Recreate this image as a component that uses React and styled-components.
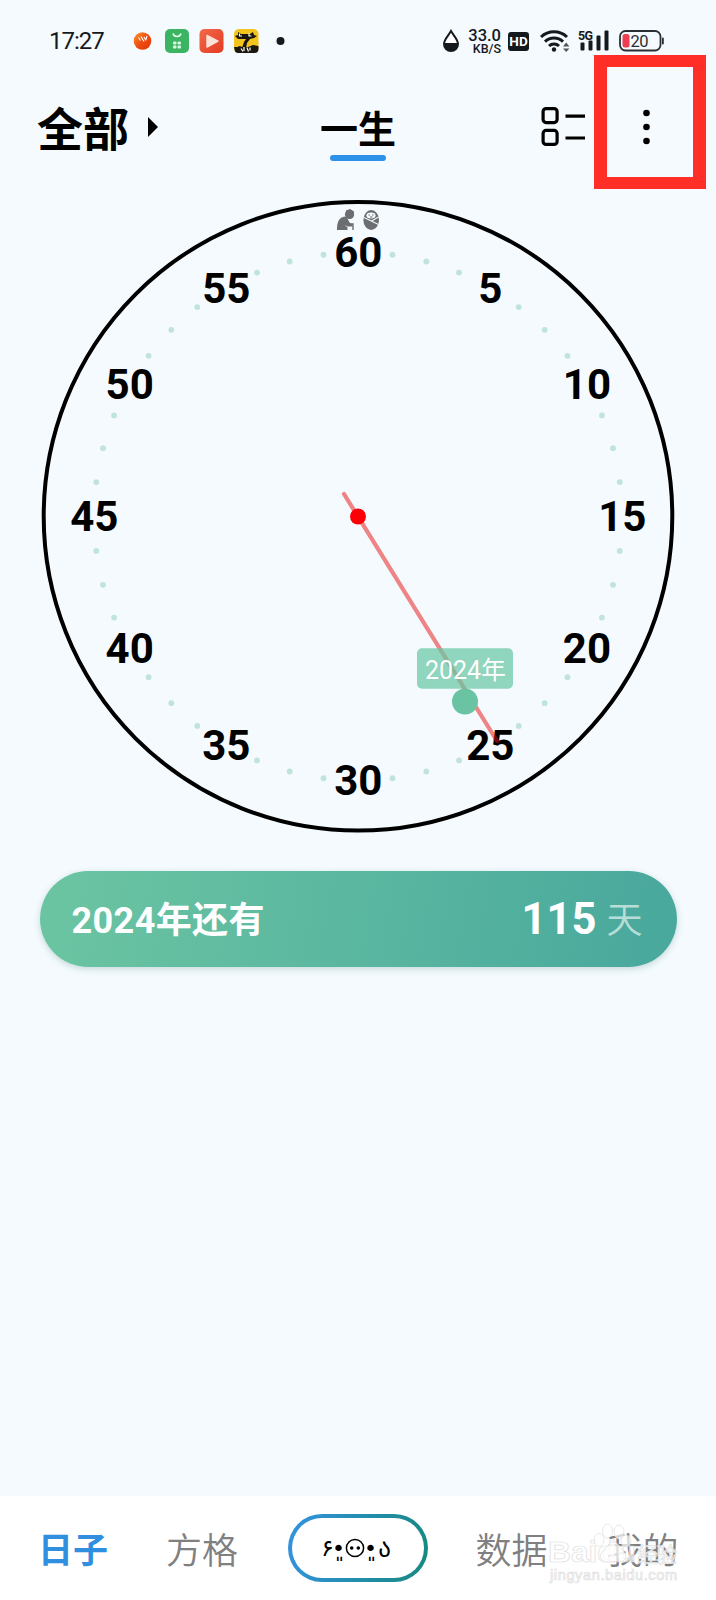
import React from "react";
import styled, { createGlobalStyle } from "styled-components";

const GlobalStyle = createGlobalStyle`
  body {
    margin: 0;
    background-color: #f4fafd;
    font-family: Roboto, "Noto Sans CJK SC", sans-serif;
  }
`;

const Screen = styled.div`
  position: relative;
  display: flex;
  flex-direction: column;
  box-sizing: border-box;
  width: 716px;
  height: 1600px;
  overflow: hidden;
  background-color: #f4fafd;
  color: #000;
`;

const StatusBar = styled.div`
  display: flex;
  align-items: center;
  justify-content: space-between;
  height: 82px;
  padding: 0 52px 0 49px;
  box-sizing: border-box;
  color: #14191d;
`;

const StatusGroup = styled.div`
  display: flex;
  align-items: center;
  gap: ${({ $gap }) => $gap || 0}px;
`;

const Time = styled.span`
  width: 84px;
  font-size: 24px;
  letter-spacing: -1px;
  line-height: 28px;
`;

const Speed = styled.div`
  display: flex;
  flex-direction: column;
  align-items: flex-end;
  width: 34px;
  margin: 0 7px 0 7px;
  font-weight: 500;
`;

const SpeedValue = styled.span`
  font-size: 16.5px;
  line-height: 13px;
`;

const SpeedUnit = styled.span`
  font-size: 12.5px;
  line-height: 11px;
  margin-top: 1px;
`;

const HdBadge = styled.span`
  width: 21px;
  height: 19px;
  margin-right: 11px;
  border-radius: 3px;
  background-color: #14191d;
  color: #fff;
  font-size: 13.5px;
  font-weight: 700;
  line-height: 19px;
  text-align: center;
`;

const Header = styled.header`
  position: relative;
  display: grid;
  grid-template-columns: 1fr 80px 1fr;
  align-items: center;
  height: 92px;
  padding: 0 37px;
`;

const Filter = styled.div`
  display: flex;
  align-items: center;
  gap: 19px;
  margin-top: 3px;
  font-size: 46px;
  font-weight: 700;
  line-height: 60px;
`;

const Arrow = styled.span`
  border-left: 10px solid #000;
  border-top: 10px solid transparent;
  border-bottom: 10px solid transparent;
  margin-top: -5px;
`;

const Heading = styled.div`
  display: flex;
  flex-direction: column;
  align-items: center;
  margin-top: 9px;
  font-size: 38px;
  font-weight: 700;
  line-height: 50px;

  &::after {
    content: "";
    width: 56px;
    height: 6px;
    border-radius: 3px;
    background-color: #2d91e9;
  }
`;

const HeaderActions = styled.div`
  display: flex;
  align-items: center;
  justify-content: flex-end;
  gap: 57px;
  margin: -2px 28px 0 0;
`;

const Highlight = styled.div`
  position: absolute;
  top: -27px;
  left: 593.5px;
  width: 112px;
  height: 134px;
  box-sizing: border-box;
  border: 13px solid #ff2f28;
  border-top-width: 12px;
  border-bottom-width: 12px;
`;

const Dial = styled.svg`
  display: block;
  width: 640px;
  height: 640px;
  margin: 22px auto 0 38px;
`;

const DialNumber = styled.text`
  font-size: 42px;
  font-weight: 700;
  text-anchor: middle;
`;

const TagText = styled.text`
  font-size: 25px;
  fill: #fff;
  text-anchor: middle;
`;

const Card = styled.section`
  display: flex;
  align-items: center;
  box-sizing: border-box;
  width: 637px;
  height: 96px;
  margin: 35px 0 0 39.5px;
  padding: 0 34px 0 32px;
  border-radius: 48px;
  background: linear-gradient(100deg, #6ac4a2 5%, #4aa99d 95%);
  box-shadow: 0 2px 6px rgba(60, 120, 120, 0.25);
  color: #fff;
`;

const CardTitle = styled.span`
  flex: 1;
  margin-top: -4px;
  font-size: 36px;
  font-weight: 700;
  letter-spacing: 0.4px;
`;

const CardDays = styled.span`
  font-size: 43.5px;
  font-weight: 700;
`;

const CardUnit = styled.span`
  margin: -5px 0 0 10px;
  font-size: 36px;
  font-weight: 350;
  opacity: 0.6;
`;

const TabBar = styled.nav`
  display: flex;
  align-items: center;
  height: 104px;
  margin-top: auto;
  padding: 0 38px;
  background-color: #fff;
`;

const Tab = styled.span`
  flex: none;
  width: 72px;
  margin: 8px ${({ $gap }) => $gap || 0}px 0 0;
  font-size: ${({ $active }) => ($active ? 35 : 36)}px;
  line-height: 48px;
  font-weight: ${({ $active }) => ($active ? 700 : 350)};
  color: ${({ $active }) => ($active ? "#318fe0" : "#808080")};
`;

const FaceButton = styled.div`
  flex: none;
  display: flex;
  align-items: center;
  justify-content: center;
  box-sizing: border-box;
  width: 140px;
  height: 68px;
  margin-right: 48px;
  border: 4px solid transparent;
  border-radius: 34px;
  background: linear-gradient(#fff, #fff) padding-box,
    linear-gradient(100deg, #3393e0, #16897f) border-box;
  font-family: "DejaVu Sans", sans-serif;
`;

const FacePart = styled.span`
  display: flex;
  justify-content: center;
  width: ${({ $w }) => $w}px;
  font-size: ${({ $size }) => $size || 22}px;
  white-space: nowrap;
`;

const Watermark = styled.div`
  position: absolute;
  left: 548px;
  top: 1520px;
  width: 134px;
  height: 68px;
`;

const WatermarkText = styled.text`
  font-family: "Liberation Sans", "Noto Sans CJK SC", sans-serif;
  font-size: ${({ $size }) => $size}px;
  font-weight: ${({ $weight }) => $weight || 700};
  fill: rgba(255, 255, 255, 0.7);
  stroke: #dedede;
  stroke-width: 0.7px;
`;

const CENTER = 320;
const RADIUS = 264;

const polar = (deg) => {
  const rad = (deg * Math.PI) / 180;
  return [CENTER + RADIUS * Math.sin(rad), CENTER - RADIUS * Math.cos(rad)];
};

const AppIcons = () => (
  <svg width="126" height="24" viewBox="0 0 126 24">
    <defs>
      <linearGradient id="orange" x1="0" y1="0" x2="1" y2="1">
        <stop offset="0" stopColor="#f89a2b" />
        <stop offset="0.5" stopColor="#ee4d12" />
        <stop offset="1" stopColor="#e0350a" />
      </linearGradient>
      <linearGradient id="red" x1="0" y1="0" x2="1" y2="1">
        <stop offset="0" stopColor="#f26a4a" />
        <stop offset="1" stopColor="#e33a22" />
      </linearGradient>
    </defs>
    <circle cx="9.5" cy="12" r="8.8" fill="url(#orange)" />
    <path d="M5.5 8.500l2 3M8 7.500l3 5M11 8l2 3.500M14 7l-1 3.500" stroke="#fff" strokeWidth="1.1" fill="none" />
    <rect x="32" y="0" width="24" height="24" rx="5" fill="#3cb562" />
    <path d="M40 4.500c1 4 7 4 8 0" stroke="#e6ffec" strokeWidth="1.5" fill="none" />
    <g fill="#d9f7df">
      <rect x="40" y="12.5" width="3.5" height="3" rx="1" />
      <rect x="44.5" y="12.5" width="3.5" height="3" rx="1" />
      <rect x="40" y="16.5" width="3.5" height="3" rx="1" />
      <rect x="44.5" y="16.5" width="3.5" height="3" rx="1" />
    </g>
    <rect x="66.5" y="0" width="24" height="24" rx="5" fill="url(#red)" />
    <path d="M74 6.500v11.500l11-5.800z" fill="#fde0d8" stroke="#fde0d8" strokeWidth="1.5" strokeLinejoin="round" />
    <rect x="101" y="0" width="24.5" height="24" rx="5" fill="#f3c51c" />
    <path d="M102 7l3-1 0-3 3 2h9l3-2 1 3 3 1-3 2-4 1-3 4-1 5h-4l2-6 2-3h-8z" fill="#19170f" />
    <path d="M101 18l4 0 1-1 4 1 5 0 5-2 5.500 1v3a4 4 0 0 1-4 4h-16a4 4 0 0 1-4-4z" fill="#19170f" />
    <path d="M106.500 4.500v2.500h2.500M116 4.500v2.500h2.500M108 19.500l2 3M111 18v4M114 18.500l1.500 4M117 18.500v3" stroke="#fff" strokeWidth="1.2" fill="none" />
  </svg>
);

const DropIcon = () => (
  <svg width="18" height="24" viewBox="0 0 18 24">
    <path d="M9 2C6.500 6.500 2 10.500 2 15a7 7 0 0 0 14 0C16 10.500 11.500 6.500 9 2z" fill="#fff" stroke="#14191d" strokeWidth="2" />
    <path d="M2 14h14c0 10-14 10-14 0z" fill="#14191d" />
  </svg>
);

const WifiIcon = () => (
  <svg width="31" height="24" viewBox="0 0 31 24">
    <g fill="none" stroke="#14191d" strokeWidth="3">
      <path d="M1 8a19 19 0 0 1 26 0" />
      <path d="M5 12.700a13 13 0 0 1 18 0" />
      <path d="M9 17a7.200 7.200 0 0 1 10 0" />
    </g>
    <circle cx="14" cy="20.5" r="2.2" fill="#14191d" />
    <path d="M23 17.500l3.200-4 3.200 4zM23 19.500l3.200 3.500 3.200-3.500z" fill="#555" />
  </svg>
);

const SignalIcon = () => (
  <svg width="33" height="24" viewBox="0 0 33 24" overflow="visible">
    <text x="0" y="10.5" fontSize="12.5" fontWeight="700" textLength="15" fill="#14191d">5G</text>
    <g fill="#14191d">
      <rect x="2.500" y="13.5" width="4" height="8" rx="1" />
      <rect x="10.500" y="11.5" width="4" height="10" rx="1" />
      <rect x="18.500" y="6.5" width="4" height="15" rx="1" />
      <rect x="26.500" y="1.5" width="4" height="20" rx="1" />
    </g>
  </svg>
);

const BatteryIcon = () => (
  <svg width="46" height="22" viewBox="0 0 46 22">
    <rect x="2" y="1" width="40.5" height="19.5" rx="5.5" fill="none" stroke="#2a2f33" strokeWidth="1.800" />
    <rect x="4.5" y="4" width="7" height="13.5" rx="2.5" fill="#ee3d50" />
    <rect x="44" y="7.5" width="1.8" height="7" rx="0.9" fill="#2a2f33" />
    <text x="12.5" y="16.5" fontSize="16.5" textLength="18" fill="#2a2f33">20</text>
  </svg>
);

const ListIcon = () => (
  <svg width="45" height="42" viewBox="0 0 45 42">
    <g fill="none" stroke="#000" strokeWidth="3.2">
      <rect x="2.1" y="2.6" width="14" height="14" rx="3" />
      <rect x="2.1" y="24.4" width="14" height="14" rx="3" />
      <path d="M24.500 10.200h19.500M24.500 32h19.500" />
    </g>
  </svg>
);

const MoreIcon = () => (
  <svg width="8" height="36" viewBox="0 0 8 36">
    <circle cx="3.5" cy="4" r="3.3" />
    <circle cx="3.5" cy="18" r="3.3" />
    <circle cx="3.5" cy="32" r="3.3" />
  </svg>
);

const FaceIcon = () => (
  <svg width="20" height="20" viewBox="0 0 20 20">
    <circle cx="10" cy="10" r="8.6" fill="none" stroke="#000" strokeWidth="1.5" />
    <circle cx="6.7" cy="10" r="1.8" />
    <circle cx="13.3" cy="10" r="1.8" />
  </svg>
);

const Clock = () => {
  const marks = Array.from({ length: 48 }, (_, i) => i * 7.5);

  return (
    <Dial viewBox="0 0 640 640">
      <circle cx={CENTER} cy="320.3" r="314.3" fill="none" stroke="#000" strokeWidth="4" />

      {/* old man and swaddled baby */}
      <g fill="#6b6d70">
        <circle cx="311.5" cy="18.5" r="4.6" />
        <path d="M308 14.500l4-1.500 4 2.500-1 6-4 1.500-3-4z" />
        <path d="M299 34c0-8 2-13 8-13.500 3 1 3 4 5 6.500l2.500 1.500v2h-5l-3-1.500 3 2.500v2.500z" />
        <path d="M311.500 28h3.500v6" fill="none" stroke="#6b6d70" strokeWidth="1.4" />
        <ellipse cx="333.2" cy="24" rx="7.8" ry="10" />
      </g>
      <ellipse cx="333" cy="19.5" rx="4.6" ry="3" fill="#f4fafd" />
      <path d="M330.500 19h1.500M334 19h1.500M332 21h2.500" stroke="#6b6d70" strokeWidth="1" />
      <path d="M326 21.500l14.500 7M340.500 21l-7 4" stroke="#f4fafd" strokeWidth="1.1" fill="none" />

      {marks.map((deg, i) => {
        const [x, y] = polar(deg);
        return i % 4 === 0 ? (
          <DialNumber key={deg} x={x + 0.3} y={y + 15.4}>
            {deg === 0 ? 60 : deg / 6}
          </DialNumber>
        ) : (
          <circle key={deg} cx={x} cy={y + 0.5} r="2.9" fill="#c0e4da" />
        );
      })}

      <line x1="306" y1="298" x2="459" y2="545" stroke="#e80d0d" strokeOpacity="0.5" strokeWidth="4.2" strokeLinecap="round" />
      <circle cx={CENTER} cy="320.5" r="8" fill="#fb0007" />
      <circle cx="427" cy="505.5" r="13" fill="#6ac3a3" />
      <rect x="379" y="452.3" width="96" height="40.5" rx="5" fill="#6ac6a4" fillOpacity="0.72" />
      <TagText x="427.5" y="482.5">2024年</TagText>
    </Dial>
  );
};

const App = () => {
  return (
    <>
      <GlobalStyle />
      <Screen>
        <StatusBar>
          <StatusGroup>
            <Time>17:27</Time>
            <AppIcons />
            <svg width="40" height="10" viewBox="0 0 40 10">
              <circle cx="21.5" cy="5" r="4" fill="#14191d" />
            </svg>
          </StatusGroup>
          <StatusGroup>
            <DropIcon />
            <Speed>
              <SpeedValue>33.0</SpeedValue>
              <SpeedUnit>KB/S</SpeedUnit>
            </Speed>
            <HdBadge>HD</HdBadge>
            <StatusGroup $gap={7}>
              <WifiIcon />
              <SignalIcon />
              <BatteryIcon />
            </StatusGroup>
          </StatusGroup>
        </StatusBar>

        <Header>
          <Filter>
            全部
            <Arrow />
          </Filter>
          <Heading>一生</Heading>
          <HeaderActions>
            <ListIcon />
            <MoreIcon />
          </HeaderActions>
          <Highlight />
        </Header>

        <Clock />

        <Card>
          <CardTitle>2024年还有</CardTitle>
          <CardDays>115</CardDays>
          <CardUnit>天</CardUnit>
        </Card>

        <TabBar>
          <Tab $active $gap={56}>日子</Tab>
          <Tab $gap={49.5}>方格</Tab>
          <FaceButton>
            <FacePart $w={12} $size={24}>۶</FacePart>
            <FacePart $w={10}>•͈</FacePart>
            <FacePart $w={22}>
              <FaceIcon />
            </FacePart>
            <FacePart $w={10}>•͈</FacePart>
            <FacePart $w={18} $size={25}>ა</FacePart>
          </FaceButton>
          <Tab $gap={59}>数据</Tab>
          <Tab>我的</Tab>
        </TabBar>

        <Watermark>
          <svg width="134" height="68" viewBox="0 0 134 68">
            <WatermarkText x="0" y="42" $size={29} textLength="88" lengthAdjust="spacingAndGlyphs">Baidu</WatermarkText>
            <WatermarkText x="89" y="42" $size={21} $weight={400} textLength="40">经验</WatermarkText>
            <g fill="#fff" fillOpacity="0.7" stroke="#dedede" strokeWidth="0.7">
              <ellipse cx="51" cy="20" rx="5" ry="6.5" />
              <ellipse cx="59.5" cy="11" rx="5" ry="7" />
              <ellipse cx="71" cy="12" rx="5" ry="7" />
              <ellipse cx="78" cy="21" rx="5" ry="6" />
              <path d="M65 22c-5 0-6 6-10 9-5 5-2 11 4 11 4 0 8-1 12 0 7 0 9-7 4-11-4-4-5-9-10-9z" />
            </g>
            <WatermarkText x="2" y="60" $size={14.5} $weight={400} textLength="127">jingyan.baidu.com</WatermarkText>
          </svg>
        </Watermark>
      </Screen>
    </>
  );
};

export default App;
